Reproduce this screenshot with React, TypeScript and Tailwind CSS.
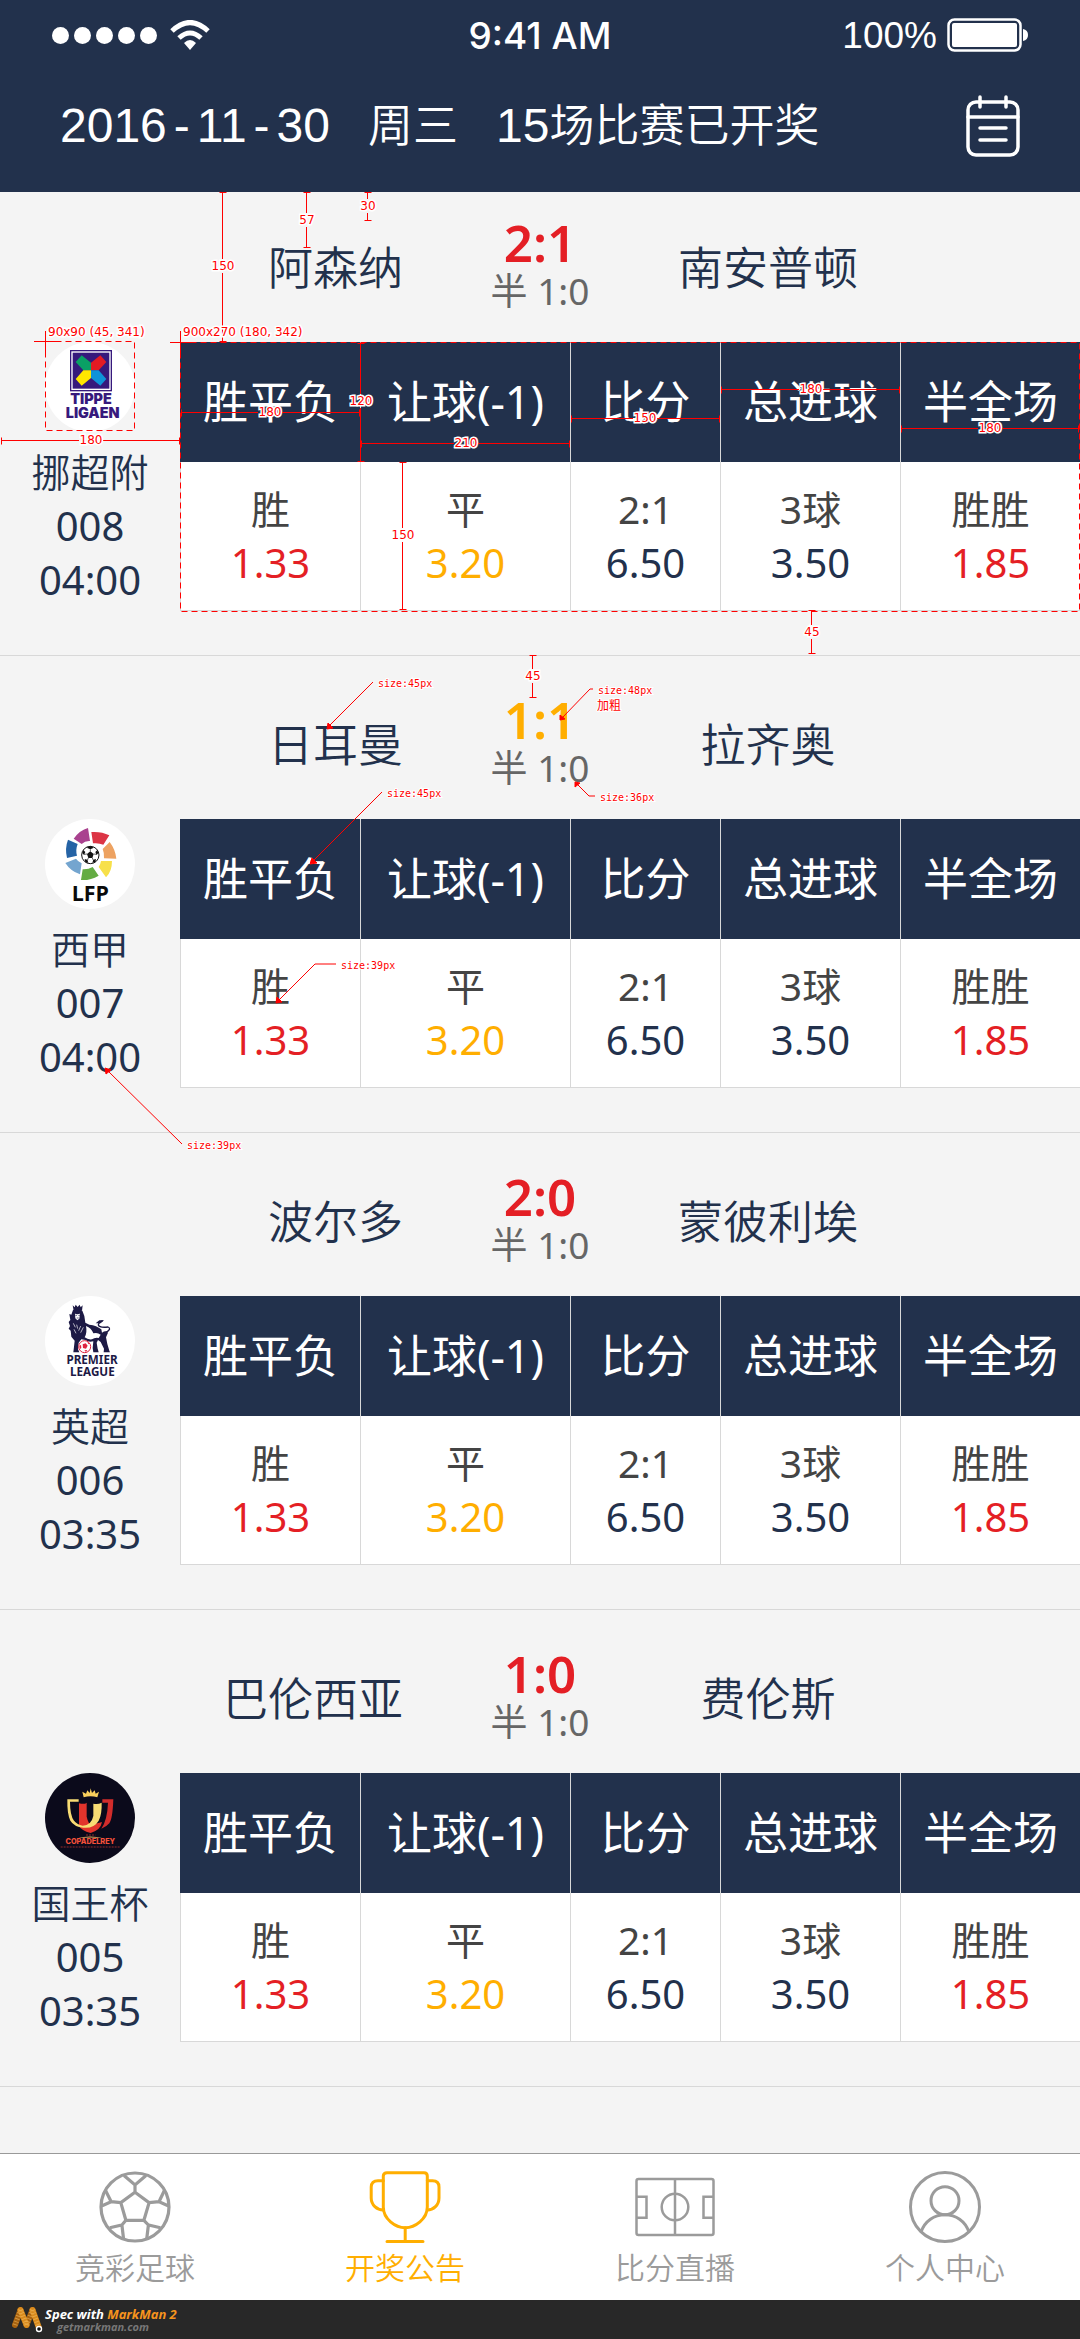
import type { ReactNode } from "react";

type Tone = "red" | "orange" | "navy";

const toneClass: Record<Tone, string> = {
  red: "text-[#e41f25]",
  orange: "text-[#ffae00]",
  navy: "text-[#22314c]",
};

type Match = {
  id: string;
  league: string;
  time: string;
  home: string;
  away: string;
  score: string;
  scoreTone: Tone;
  crest: ReactNode;
};

const odds: { head: string; label: string; value: string; tone: Tone }[] = [
  { head: "胜平负", label: "胜", value: "1.33", tone: "red" },
  { head: "让球(-1)", label: "平", value: "3.20", tone: "orange" },
  { head: "比分", label: "2:1", value: "6.50", tone: "navy" },
  { head: "总进球", label: "3球", value: "3.50", tone: "navy" },
  { head: "半全场", label: "胜胜", value: "1.85", tone: "red" },
];

function TippeCrest() {
  return (
    <svg viewBox="45 36 270 270" className="size-[90px] rounded-full bg-white" aria-hidden="true">
      <rect x="120" y="60" width="126" height="124" fill="#36197c" />
      <rect x="126" y="66" width="114" height="112" fill="none" stroke="#fff" strokeWidth="4" />
      <path d="M137 96 155 76 183 98V121H160Z" fill="#0aa065" />
      <path d="M229 96 211 76 183 98V121H206Z" fill="#e31b23" />
      <path d="M137 147 155 167 183 144V121H160Z" fill="#ffe600" />
      <path d="M229 147 211 167 183 144V121H206Z" fill="#0f93d8" />
      <g fill="#36197c" fontFamily="Inter, sans-serif" fontWeight="900" fontSize="43" textAnchor="middle">
        <text x="183" y="221">TIPPE</text>
        <text x="188" y="263">LIGAEN</text>
      </g>
    </svg>
  );
}

function LfpCrest() {
  return (
    <svg viewBox="45 27 270 270" className="size-[90px] rounded-full bg-white" aria-hidden="true">
      <path d="M131 86Q150 60 174 54L180 93Q165 92 155 102Z" fill="#a9428f" />
      <path d="M184 66Q215 64 238 76L220 104Q206 98 189 100Z" fill="#dc3545" />
      <path d="M239 96Q256 118 259 146L222 145Q223 128 218 117Z" fill="#eda261" />
      <path d="M246 153Q246 185 228 202L206 171Q212 162 213 153Z" fill="#f7e04a" />
      <path d="M153 210Q180 212 206 197L188 171Q175 179 158 178Z" fill="#64ac43" />
      <path d="M106 159Q122 184 150 193L155 160Q144 155 138 146Z" fill="#74a5cf" />
      <path d="M114 89 143 102Q136 120 141 137L111 144Q104 115 114 89Z" fill="#2563a5" />
      <circle cx="181" cy="135" r="26" fill="#fff" stroke="#111" strokeWidth="3" />
      <path d="M181 124 191 132 187 144H175L171 132Z" fill="#111" />
      <path d="M170 113 181 108 192 113 181 118ZM157 129 160 120 166 126 162 135ZM205 129 202 120 196 126 200 135ZM166 157 164 147 172 149 175 158ZM196 157 198 147 190 149 187 158Z" fill="#111" />
      <path d="M181 118V124M162 133 171 132M200 133 191 132M172 151 175 144M190 151 187 144" stroke="#111" strokeWidth="2" />
      <text x="181" y="272" fill="#0a0a0a" fontFamily="'Open Sans', sans-serif" fontWeight="700" fontSize="64" textAnchor="middle">
        LFP
      </text>
    </svg>
  );
}

function PremierCrest() {
  return (
    <svg viewBox="45 48 270 270" className="size-[90px] rounded-full bg-white" aria-hidden="true">
      <path d="M128 76 134 82 137 74 143 81 149 74 152 82 158 76 156 92H131Z" fill="#1d1a45" />
      <path d="M129 90Q143 84 157 92L163 108 166 128 178 134Q200 136 214 148L216 158Q228 150 234 158L228 172 232 192 238 212 240 217H221L222 206 212 186 204 180 200 188 203 206 206 217H190L188 204 190 184Q176 188 166 180L154 178 146 188 144 208 148 217H130L132 200 134 182 124 170 122 152 116 146 120 138 116 126 121 120 118 102 124 104Z" fill="#1d1a45" />
      <path d="M228 157Q246 146 234 141Q208 144 205 135Q206 127 218 122" fill="none" stroke="#1d1a45" strokeWidth="4" />
      <path d="M197 130 208 121 222 121 212 130Z" fill="#1d1a45" />
      <path d="M168 138Q184 144 190 160Q202 156 212 164L206 174Q194 172 186 178Q174 180 164 172Q172 158 168 138Z" fill="#fff" />
      <path d="M135 101 142 103 150 101 148 116 142 121 136 115Z" fill="#fff" />
      <path d="M136 106H141M145 106H150M140 114H146" stroke="#1d1a45" strokeWidth="2" />
      <path d="M130 130 136 142M140 134 143 146M152 138 146 152M160 142 152 158M132 148 138 160" stroke="#fff" strokeWidth="2" />
      <circle cx="164" cy="200" r="18" fill="#fff" stroke="#de2340" strokeWidth="3" />
      <path d="M158 193 167 190 173 197 168 206 159 204ZM148 198 153 194 154 204 150 207ZM172 185 178 190 175 193ZM163 211 172 210 168 216Z" fill="#de2340" />
      <g fill="#1d1a45" fontFamily="'Noto Sans', sans-serif" fontWeight="700" fontSize="35" textAnchor="middle">
        <text x="186" y="251">PREMIER</text>
        <text x="187" y="288">LEAGUE</text>
      </g>
    </svg>
  );
}

function CopaCrest() {
  return (
    <svg viewBox="45 39 270 270" className="size-[90px] rounded-full bg-[#0b0a1b]" aria-hidden="true">
      <path d="M161 112 157 95 168 101 172 91 179 99 182 85 186 99 194 91 197 101 207 95 202 112Q182 106 161 112Z" fill="#f9cf5c" />
      <path d="M217 118H250Q248 176 238 190Q230 200 214 206Q232 180 234 128H217Z" fill="#d22c2b" />
      <path d="M147 130Q164 134 170 128V170Q176 196 186 194L216 186Q212 210 182 219Q154 212 147 198Z" fill="#e2342c" />
      <path d="M112 118H146V125H120Q120 166 132 182Q142 194 158 197Q184 196 190 168V131Q204 134 215 128Q216 164 206 182Q192 206 160 203Q132 200 121 182Q111 162 112 118Z" fill="#f8dc74" />
      <path d="M142 235Q180 224 220 235Q180 230 142 235Z" fill="#e9b565" />
      <text x="181" y="251" fill="#f4513a" fontFamily="Inter, sans-serif" fontWeight="800" fontSize="22" textAnchor="middle">
        COPADELREY
      </text>
      <path d="M92 261H272M168 225H196" stroke="#8e2a2c" strokeWidth="3" strokeDasharray="6 3" />
    </svg>
  );
}

const matches: Match[] = [
  { id: "008", league: "挪超附", time: "04:00", home: "阿森纳", away: "南安普顿", score: "2:1", scoreTone: "red", crest: <TippeCrest /> },
  { id: "007", league: "西甲", time: "04:00", home: "日耳曼", away: "拉齐奥", score: "1:1", scoreTone: "orange", crest: <LfpCrest /> },
  { id: "006", league: "英超", time: "03:35", home: "波尔多", away: "蒙彼利埃", score: "2:0", scoreTone: "red", crest: <PremierCrest /> },
  { id: "005", league: "国王杯", time: "03:35", home: "巴伦西亚", away: "费伦斯", score: "1:0", scoreTone: "red", crest: <CopaCrest /> },
];

function StatusBar() {
  return (
    <div className="grid h-[70px] grid-cols-3 items-center px-[52px] font-['Liberation_Sans',sans-serif] text-[37px] leading-none">
      <div className="flex items-center gap-[13px]">
        <div className="flex gap-[5px]">
          {[0, 1, 2, 3, 4].map((n) => (
            <span key={n} className="size-[17px] rounded-full bg-white" />
          ))}
        </div>
        <svg viewBox="0 0 40 30" className="h-[30px] w-10" aria-hidden="true">
          <g fill="none" stroke="#fff" strokeWidth="5">
            <path d="M2 11Q20-6 38 11" />
            <path d="M9 18Q20 8 31 18" />
          </g>
          <path d="M14 23Q20 17 26 23L20 30Z" fill="#fff" />
        </svg>
      </div>
      <div className="text-center font-['Inter',sans-serif] font-medium">9:41 AM</div>
      <div className="flex items-center justify-end gap-2.5">
        <span>100%</span>
        <svg viewBox="0 0 81 34" className="h-[34px] w-[81px]" aria-hidden="true">
          <rect x="1.5" y="1.5" width="72" height="31" rx="6" fill="none" stroke="#fff" strokeWidth="2.5" />
          <rect x="5" y="5" width="65" height="24" rx="2" fill="#fff" />
          <path d="M76 11Q81 12 81 17Q81 22 76 23Z" fill="#fff" />
        </svg>
      </div>
    </div>
  );
}

function Header() {
  return (
    <header className="bg-[#22314c] text-white">
      <StatusBar />
      <div className="flex h-[122px] items-center justify-between px-[60px] pb-2.5">
        <h1 className="flex items-baseline gap-[38px] font-['Liberation_Sans','Noto_Sans_CJK_SC',sans-serif] text-[45px] leading-[60px] font-[350]">
          <span className="text-[48px]">
            2016<span className="mx-[7px]">-</span>11<span className="mx-[7px]">-</span>30
          </span>
          <span>周三</span>
          <span>
            <span className="text-[48px]">15</span>场比赛已开奖
          </span>
        </h1>
        <button type="button" aria-label="选择日期">
          <svg viewBox="0 0 54 62" className="h-[62px] w-[54px]" fill="none" stroke="#fff" strokeWidth="3.5" strokeLinecap="round" aria-hidden="true">
            <rect x="2" y="7" width="50" height="53" rx="8" />
            <path d="M2 22H52M14 2V12M40 2V12M14 33H40M14 45H40" />
          </svg>
        </button>
      </div>
    </header>
  );
}

function OddsTable() {
  return (
    <table className="w-full table-fixed border-separate border-spacing-0 text-center">
      <colgroup>
        <col className="w-[180px]" />
        <col className="w-[210px]" />
        <col className="w-[150px]" />
        <col className="w-[180px]" />
        <col className="w-[180px]" />
      </colgroup>
      <thead>
        <tr className="h-[120px] bg-[#22314c] text-[45px] leading-[60px] text-white">
          {odds.map((o) => (
            <th key={o.head} scope="col" className="border-l border-[#d8d8d8] p-0 font-normal whitespace-nowrap first:border-[#22314c]">
              {o.head}
            </th>
          ))}
        </tr>
      </thead>
      <tbody>
        <tr className="h-[149px] bg-white leading-[54px]">
          {odds.map((o) => (
            <td key={o.head} className="border-b border-l border-[#d8d8d8] p-0">
              <div className="text-[39px] text-[#444]">{o.label}</div>
              <div className={`text-[40px] ${toneClass[o.tone]}`}>{o.value}</div>
            </td>
          ))}
        </tr>
      </tbody>
    </table>
  );
}

function MatchCard({ match }: { match: Match }) {
  return (
    <section className="border-b border-[#d8d8d8] pt-[13px] pb-11 first:pt-0">
      <div className="grid h-[150px] grid-cols-[403fr_274fr_182fr_221fr] items-center pt-0.5 text-[45px] leading-[60px] whitespace-nowrap">
        <h2 className="text-right font-[350]">{match.home}</h2>
        <div className="pb-2 text-center">
          <div className={`text-[51px] leading-[54px] font-semibold ${toneClass[match.scoreTone]}`}>{match.score}</div>
          <div className="text-[37px] leading-[44px] text-[#666]">半 1:0</div>
        </div>
        <h2 className="flex justify-center font-[350]">{match.away}</h2>
      </div>
      <div className="flex">
        <div className="flex w-1/6 flex-col items-center leading-[54px]">
          {match.crest}
          <div className="mt-[13px] text-[39px] font-[350]">{match.league}</div>
          <div className="text-[40px]">{match.id}</div>
          <div className="text-[40px]">{match.time}</div>
        </div>
        <div className="flex-1">
          <OddsTable />
        </div>
      </div>
    </section>
  );
}

/* Red-line measurements drawn over the screen. */
type Dim = { x1: number; y1: number; x2: number; y2: number; label: string; cx: number; cy: number };

const dims: Dim[] = [
  { x1: 222.5, y1: 192, x2: 222.5, y2: 342, label: "150", cx: 223, cy: 266 },
  { x1: 306.5, y1: 192, x2: 306.5, y2: 248, label: "57", cx: 307, cy: 220 },
  { x1: 367.5, y1: 192, x2: 367.5, y2: 221, label: "30", cx: 368, cy: 206 },
  { x1: 1, y1: 440.5, x2: 180, y2: 440.5, label: "180", cx: 91, cy: 440 },
  { x1: 181, y1: 412.5, x2: 360, y2: 412.5, label: "180", cx: 270, cy: 412 },
  { x1: 360.5, y1: 343, x2: 360.5, y2: 462, label: "120", cx: 361, cy: 401 },
  { x1: 361, y1: 443.5, x2: 570, y2: 443.5, label: "210", cx: 466, cy: 443 },
  { x1: 402.5, y1: 462, x2: 402.5, y2: 610, label: "150", cx: 403, cy: 535 },
  { x1: 571, y1: 418.5, x2: 720, y2: 418.5, label: "150", cx: 645, cy: 418 },
  { x1: 721, y1: 389.5, x2: 900, y2: 389.5, label: "180", cx: 811, cy: 389 },
  { x1: 901, y1: 428.5, x2: 1079, y2: 428.5, label: "180", cx: 990, cy: 428 },
  { x1: 811.5, y1: 610, x2: 811.5, y2: 654, label: "45", cx: 812, cy: 632 },
  { x1: 532.5, y1: 655, x2: 532.5, y2: 698, label: "45", cx: 533, cy: 676 },
];

const notes: { points: string; tip: string; x: number; y: number; label: string }[] = [
  { points: "373,682 329,726", tip: "M327 729 328 723 333 728Z", x: 378, y: 687, label: "size:45px" },
  { points: "382,792 313,861", tip: "M310 864 312 858 317 863Z", x: 387, y: 797, label: "size:45px" },
  { points: "336,964 315,964 279,1000", tip: "M276 1003 277 997 282 1002Z", x: 341, y: 969, label: "size:39px" },
  { points: "182,1144 108,1071", tip: "M105 1068 111 1070 106 1074Z", x: 187, y: 1149, label: "size:39px" },
  { points: "593,689 590,689 562,718", tip: "M560 720 560 715 565 719Z", x: 598, y: 694, label: "size:48px" },
  { points: "595,796 589,796 577,784", tip: "M575 782 580 783 575 787Z", x: 600, y: 801, label: "size:36px" },
];

function Measurements() {
  return (
    <svg
      width="1080"
      height="1160"
      viewBox="0 0 1080 1160"
      className="pointer-events-none absolute top-0 left-0 font-['DejaVu_Sans',sans-serif] text-[12px]"
      fill="none"
      stroke="red"
      strokeWidth="1"
      aria-hidden="true"
    >
      <g strokeDasharray="6 4">
        <rect x="45.5" y="341.5" width="89" height="89" />
        <rect x="180.5" y="342.5" width="899" height="269" />
      </g>
      <path d="M34 341.5H60M45.5 331V357M170 342.5H196M180.5 331V357" />
      {dims.map((d) => {
        const vertical = d.x1 === d.x2;
        return (
          <g key={`${d.x1}-${d.y1}`}>
            {vertical ? (
              <path
                d={`M${d.x1} ${d.y1}V${d.cy - 7}M${d.x1} ${d.cy + 7}V${d.y2}M${d.x1 - 3} ${d.y1 + 0.5}h7M${d.x1 - 3} ${d.y2 - 0.5}h7`}
              />
            ) : (
              <path
                d={`M${d.x1} ${d.y1}H${d.cx - 12}M${d.cx + 12} ${d.y1}H${d.x2}M${d.x1 + 0.5} ${d.y1 - 3}v7M${d.x2 - 0.5} ${d.y1 - 3}v7`}
              />
            )}
            <text x={d.cx} y={d.cy + 4} textAnchor="middle" fill="red" stroke="#fff" strokeWidth="3" paintOrder="stroke">
              {d.label}
            </text>
          </g>
        );
      })}
      <g fill="red" stroke="#fff" strokeWidth="3" paintOrder="stroke">
        <text x="48" y="336">90x90 (45, 341)</text>
        <text x="183" y="336">900x270 (180, 342)</text>
      </g>
      {notes.map((n) => (
        <g key={n.points}>
          <polyline points={n.points} />
          <path d={n.tip} fill="red" />
          <text x={n.x} y={n.y} fill="red" stroke="#fff" strokeWidth="2" paintOrder="stroke" className="font-['DejaVu_Sans_Mono',monospace] text-[10px]">
            {n.label}
          </text>
        </g>
      ))}
      <text x="597" y="710" fill="red" stroke="#fff" strokeWidth="2" paintOrder="stroke" className="font-['Noto_Sans_CJK_SC',sans-serif] text-[12px]">
        加粗
      </text>
    </svg>
  );
}

const tabs: { label: string; active?: boolean; icon: ReactNode }[] = [
  {
    label: "竞彩足球",
    icon: (
      <svg viewBox="0 0 72 72" className="size-[72px]" fill="none" stroke="currentColor" strokeWidth="3.2" aria-hidden="true">
        <circle cx="36" cy="36" r="34" />
        <path d="M36 21.3 50.1 31.7 44.9 49.3H26.9L21.8 31.7ZM36 21.3V14M25 4.5 36 14 47 4.5M21.8 31.7 12.2 30.7M6.3 19 12.2 30.7 2.6 35M50.1 31.7 60 30.7M65.6 19 60 30.7 69.6 35M26.9 49.3 22.9 54M10.8 56.7 22.9 54 24.5 67.3M44.9 49.3 49.4 54M61.4 56.7 49.4 54 47.8 67.3" />
      </svg>
    ),
  },
  {
    label: "开奖公告",
    active: true,
    icon: (
      <svg viewBox="0 0 72 72" className="size-[72px]" fill="none" stroke="currentColor" strokeWidth="3" strokeLinecap="round" aria-hidden="true">
        <path d="M18 1.7H55Q58.3 1.7 58.3 5V36C58.3 48 46 56.7 36.2 56.7S14.3 48 14.3 36V5Q14.3 1.7 18 1.7Z" />
        <path d="M14.3 9.7H9Q2.2 9.7 2.2 16V27C2.2 34 8 39 14.3 39M58.3 9.7H63.5Q70 9.7 70 16V27C70 34 64.5 39 58.3 39M36.2 56.7V70M18 70.4H54" />
      </svg>
    ),
  },
  {
    label: "比分直播",
    icon: (
      <svg viewBox="0 0 80 72" className="h-[72px] w-20" fill="none" stroke="currentColor" strokeWidth="2.5" aria-hidden="true">
        <rect x="1.5" y="8" width="77" height="56" rx="2" />
        <circle cx="40" cy="36" r="13.3" />
        <path d="M40 8V64M1.5 25.7H11.5V46.7H1.5M78.5 25.7H68.5V46.7H78.5" />
      </svg>
    ),
  },
  {
    label: "个人中心",
    icon: (
      <svg viewBox="0 0 72 72" className="size-[72px]" fill="none" stroke="currentColor" strokeWidth="3" aria-hidden="true">
        <circle cx="36" cy="36" r="34.5" />
        <circle cx="36" cy="29.7" r="14" />
        <path d="M12.2 60.5C16 50 25 43.7 36 43.7S56 50 59.8 60.5" />
      </svg>
    ),
  },
];

function TabBar() {
  return (
    <nav className="grid h-[147px] grid-cols-4 border-t border-[#999] bg-white pt-[17px]">
      {tabs.map((t) => (
        <a
          key={t.label}
          href="#"
          aria-current={t.active ? "page" : undefined}
          className={`flex flex-col items-center gap-[7px] text-[30px] leading-9 font-[350] ${t.active ? "text-[#ffae00]" : "text-[#9b9b9b]"}`}
        >
          {t.icon}
          {t.label}
        </a>
      ))}
    </nav>
  );
}

function SpecFooter() {
  return (
    <footer className="flex h-[39px] items-center gap-px bg-[#282828] pl-3 font-['Open_Sans',sans-serif] italic">
      <svg viewBox="0 0 32 28" className="h-7 w-8" fill="none" strokeLinecap="round" aria-hidden="true">
        <path d="M8.5 4 3 19M20.5 4 14.5 19" stroke="#a8620f" strokeWidth="6" />
        <path d="M8.5 4 14.5 19M20.5 4 27 22" stroke="#d98a1c" strokeWidth="6" />
        <path
          d="M8.5 4 3 19M20.5 4 14.5 19M8.5 4 14.5 19M20.5 4 27 22"
          stroke="#f4c169"
          strokeWidth="5"
          strokeLinecap="butt"
          strokeDasharray="1 2"
          opacity=".55"
        />
        <circle cx="27" cy="23" r="3.2" fill="#fff" />
        <circle cx="27" cy="23" r="1.8" fill="#111" />
      </svg>
      <div className="font-bold">
        <div className="text-[13px] leading-[14px] text-white">
          Spec with <span className="text-[#f7941d]">MarkMan 2</span>
        </div>
        <div className="pl-3 text-[11px] leading-[12px] text-[#777]">getmarkman.com</div>
      </div>
    </footer>
  );
}

export default function App() {
  return (
    <div className="relative flex min-h-screen flex-col bg-[#f4f4f4] font-['Noto_Sans','Noto_Sans_CJK_SC',sans-serif] text-[#22314c]">
      <Header />
      <main className="flex-1">
        {matches.map((m) => (
          <MatchCard key={m.id} match={m} />
        ))}
      </main>
      <TabBar />
      <SpecFooter />
      <Measurements />
    </div>
  );
}
